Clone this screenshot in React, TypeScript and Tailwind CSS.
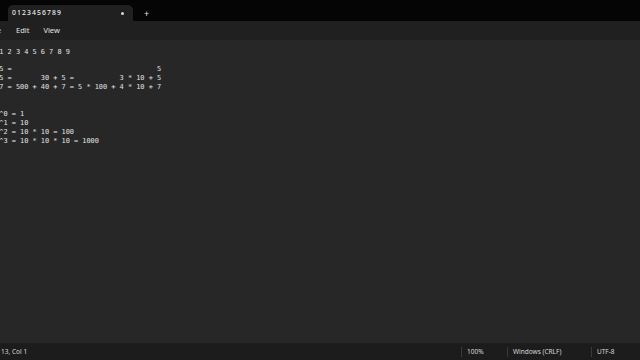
import React from "react";

const lines: string[] = [
  "0 1 2 3 4 5 6 7 8 9",
  "",
  "  5 =                                   5",
  " 35 =       30 + 5 =           3 * 10 + 5",
  "547 = 500 + 40 + 7 = 5 * 100 + 4 * 10 + 7",
  "",
  "",
  "10^0 = 1",
  "10^1 = 10",
  "10^2 = 10 * 10 = 100",
  "10^3 = 10 * 10 * 10 = 1000",
  "",
  "",
];

export default function App() {
  return (
    <div className="w-[640px] h-[360px] flex flex-col bg-[#272727] overflow-hidden font-['Noto_Sans',sans-serif]">
      {/* Title bar */}
      <div className="h-[21px] bg-[#050505] flex items-end pl-[8px] shrink-0">
        <div className="w-[125px] h-[16px] bg-[#202020] rounded-t-[5px] flex items-center justify-between pl-[4px] pr-[9px]">
          <span className="text-[6.8px] font-medium tracking-[1.1px] text-[#ececec] leading-none">0123456789</span>
          <span className="w-[3px] h-[3px] rounded-full bg-[#d8d8d8]"></span>
        </div>
        <div className="h-[16px] flex items-center ml-[11px]">
          <span className="text-[9px] text-[#e0e0e0] leading-none">+</span>
        </div>
      </div>
      {/* Menu bar */}
      <div className="h-[19px] bg-[#202020] flex items-center shrink-0 text-[7.5px] text-[#e4e4e4]">
        <span className="ml-[-11px]">File</span>
        <span className="ml-[15px]">Edit</span>
        <span className="ml-[14px]">View</span>
      </div>
      {/* Editor */}
      <div className="flex-1 overflow-hidden pt-[7.5px]">
        <div className="ml-[-9px] opacity-[0.99] font-['DejaVu_Sans_Mono',monospace] text-[6.9px] leading-[9px] text-[#e8e8e8] whitespace-pre">
          {lines.map((l, i) => (
            <div key={i} className="h-[8.95px]">{l}</div>
          ))}
        </div>
      </div>
      {/* Status bar */}
      <div className="h-[17px] bg-[#1c1c1c] flex items-center shrink-0 text-[6.5px] text-[#d8d8d8]">
        <span className="ml-[-8px]">Ln 13, Col 1</span>
        <div className="flex-1"></div>
        <div className="w-px h-[10px] bg-[#3a3a3a]"></div>
        <span className="ml-[5px] w-[40px]">100%</span>
        <div className="w-px h-[10px] bg-[#3a3a3a]"></div>
        <span className="ml-[5px] w-[78px]">Windows (CRLF)</span>
        <div className="w-px h-[10px] bg-[#3a3a3a]"></div>
        <span className="ml-[5px] w-[43px]">UTF-8</span>
      </div>
    </div>
  );
}
